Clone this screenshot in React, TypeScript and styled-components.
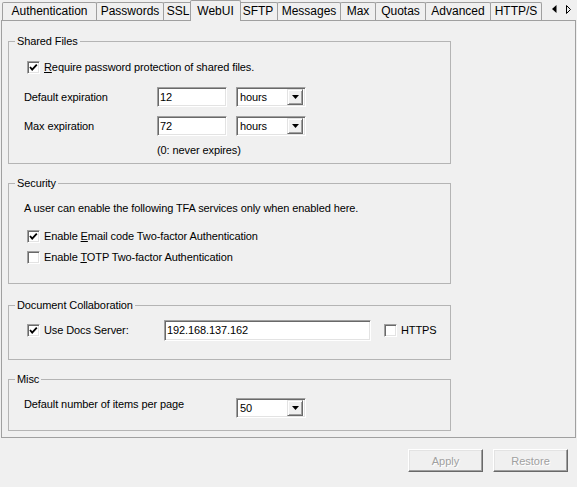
import * as React from 'react';
import styled, { createGlobalStyle } from 'styled-components';

const GlobalStyle = createGlobalStyle`
	html, body {
		margin: 0;
		padding: 0;
		background: #f0f0f0;
	}
	body {
		font-family: "Liberation Sans", Arial, sans-serif;
		font-size: 11px;
		letter-spacing: -0.1px;
		color: #000;
	}
`;

const Window = styled.div`
	width: 577px;
	height: 487px;
	display: flex;
	flex-direction: column;
	overflow: hidden;
	background: #f0f0f0;
`;

const TabStrip = styled.div`
	display: flex;
	align-items: flex-end;
	height: 20px;
	padding-left: 2px;
`;

const Tab = styled.div<{ $w: number; $active?: boolean }>`
	box-sizing: border-box;
	width: ${p => (p.$active ? p.$w + 4 : p.$w)}px;
	height: ${p => (p.$active ? 21 : 18)}px;
	margin: ${p => (p.$active ? '0 -3px -1px -2px' : '0 -1px 0 0')};
	position: relative;
	z-index: ${p => (p.$active ? 2 : 1)};
	border: 1px solid #a0a0a0;
	border-bottom: none;
	border-radius: 2px 2px 0 0;
	background: #f0f0f0;
	font-size: 12px;
	letter-spacing: 0;
	line-height: ${p => (p.$active ? 20 : 17)}px;
	text-align: center;
	white-space: nowrap;
	flex-shrink: 0;
`;

const Scroller = styled.div`
	margin-left: auto;
	align-self: center;
	display: flex;
	gap: 9px;
	padding: 0 6px 1px 0;
`;

const Panel = styled.div`
	box-sizing: border-box;
	margin-left: 1px;
	width: 575px;
	height: 418px;
	border: 1px solid #a0a0a0;
	padding: 20px 0 0 6px;
	display: flex;
	flex-direction: column;
`;

const GroupBox = styled.div<{ $h: number; $top?: number }>`
	position: relative;
	box-sizing: border-box;
	width: 443px;
	height: ${p => p.$h}px;
	margin-top: ${p => p.$top ?? 0}px;
	border: 1px solid #b4b4b4;
	flex-shrink: 0;
`;

const Caption = styled.span`
	position: absolute;
	top: -7px;
	left: 6px;
	padding: 0 2px;
	background: #f0f0f0;
	line-height: 13px;
`;

const GroupBody = styled.div<{ $pt: number }>`
	display: flex;
	flex-direction: column;
	padding: ${p => p.$pt}px 0 0 15px;
`;

const CheckRow = styled.label<{ $top?: number; $left?: number }>`
	display: flex;
	align-items: center;
	gap: 4px;
	height: 13px;
	margin: ${p => p.$top ?? 0}px 0 0 ${p => p.$left ?? 3}px;
	line-height: 13px;
	white-space: nowrap;
`;

const CheckBox = styled.span`
	box-sizing: border-box;
	width: 13px;
	height: 13px;
	flex-shrink: 0;
	background: #fff;
	border: 1px solid;
	border-color: #a0a0a0 #fff #fff #a0a0a0;
	box-shadow: inset 1px 1px 0 #696969, inset -1px -1px 0 #e3e3e3;
	display: flex;
	align-items: center;
	justify-content: center;
`;

const Key = styled.span`
	text-decoration: underline;
`;

const FieldRow = styled.div<{ $top?: number; $align?: string }>`
	display: flex;
	align-items: ${p => p.$align ?? 'center'};
	margin-top: ${p => p.$top ?? 0}px;
`;

const Label = styled.span<{ $w: number }>`
	width: ${p => p.$w}px;
	line-height: 13px;
	flex-shrink: 0;
`;

const TextBox = styled.div<{ $w: number; $h?: number }>`
	box-sizing: border-box;
	width: ${p => p.$w}px;
	height: ${p => p.$h ?? 20}px;
	background: #fff;
	border: 1px solid;
	border-color: #a0a0a0 #fff #fff #a0a0a0;
	box-shadow: inset 1px 1px 0 #696969, inset -1px -1px 0 #e3e3e3;
	padding: 2px 2px 0;
	line-height: 14px;
	flex-shrink: 0;
`;

const Combo = styled.div<{ $left?: number }>`
	box-sizing: border-box;
	width: 70px;
	height: 20px;
	margin-left: ${p => p.$left ?? 0}px;
	background: #fff;
	border: 1px solid;
	border-color: #a0a0a0 #fff #fff #a0a0a0;
	box-shadow: inset 1px 1px 0 #696969, inset -1px -1px 0 #e3e3e3;
	padding: 2px;
	display: flex;
	align-items: center;
	flex-shrink: 0;
`;

const ComboValue = styled.span`
	flex: 1;
	padding-left: 1px;
	line-height: 14px;
`;

const DropButton = styled.span`
	box-sizing: border-box;
	width: 16px;
	height: 16px;
	background: #f0f0f0;
	border: 1px solid;
	border-color: #e3e3e3 #696969 #696969 #e3e3e3;
	box-shadow: inset 1px 1px 0 #fff, inset -1px -1px 0 #a0a0a0;
	display: flex;
	align-items: center;
	justify-content: center;
`;

const Note = styled.div<{ $left: number; $top: number }>`
	margin: ${p => p.$top}px 0 0 ${p => p.$left}px;
	line-height: 13px;
`;

const Text = styled.div<{ $top?: number }>`
	margin-top: ${p => p.$top ?? 0}px;
	line-height: 13px;
`;

const Footer = styled.div`
	display: flex;
	justify-content: flex-end;
	gap: 10px;
	padding: 11px 9px 0 0;
`;

const Button = styled.button`
	box-sizing: border-box;
	width: 75px;
	height: 23px;
	padding: 0;
	background: #f0f0f0;
	border: 1px solid;
	border-color: #fff #696969 #696969 #fff;
	box-shadow: inset -1px -1px 0 #a0a0a0, inset 1px 1px 0 #e3e3e3;
	font-family: "Liberation Sans", Arial, sans-serif;
	font-size: 11px;
	color: #a0a0a0;
	text-shadow: 1px 1px 0 #fff;
`;

const tabs: [string, number][] = [
	['Authentication', 95],
	['Passwords', 68],
	['SSL', 30],
	['WebUI', 47],
	['SFTP', 40],
	['Messages', 64],
	['Max', 36],
	['Quotas', 51],
	['Advanced', 66],
	['HTTP/S', 52],
];

const Check = ({ on }: { on?: boolean }) => (
	<CheckBox>
		{on && (
			<svg width="9" height="9" viewBox="0 0 9 9">
				<path d="M1 4 L3.2 6.6 L7.8 1.6" fill="none" stroke="#000" strokeWidth="1.8" />
			</svg>
		)}
	</CheckBox>
);

const Dropdown = ({ value, left }: { value: string; left?: number }) => (
	<Combo $left={left}>
		<ComboValue>{value}</ComboValue>
		<DropButton>
			<svg width="7" height="4" viewBox="0 0 7 4">
				<path d="M0 0 H7 L3.5 4 Z" fill="#000" />
			</svg>
		</DropButton>
	</Combo>
);

export default function App() {
	return (
		<Window>
			<GlobalStyle />
			<TabStrip>
				{tabs.map(([name, w]) => (
					<Tab key={name} $w={w} $active={name === 'WebUI'}>
						{name}
					</Tab>
				))}
				<Scroller>
					<svg width="5" height="8" viewBox="0 0 5 8">
						<path d="M4.5 0 V8 L0 4 Z" fill="#000" />
					</svg>
					<svg width="5" height="9" viewBox="0 0 5 9">
						<path d="M0.5 0.5 V8.5 L4.5 4.5 Z" fill="none" stroke="#000" strokeWidth="1" />
					</svg>
				</Scroller>
			</TabStrip>

			<Panel>
				<GroupBox $h={123}>
					<Caption>Shared Files</Caption>
					<GroupBody $pt={19}>
						<CheckRow>
							<Check on />
							<span>
								<Key>R</Key>equire password protection of shared files.
							</span>
						</CheckRow>
						<FieldRow $top={13}>
							<Label $w={133}>Default expiration</Label>
							<TextBox $w={70}>12</TextBox>
							<Dropdown value="hours" left={9} />
						</FieldRow>
						<FieldRow $top={9}>
							<Label $w={133}>Max expiration</Label>
							<TextBox $w={70}>72</TextBox>
							<Dropdown value="hours" left={9} />
						</FieldRow>
						<Note $left={133} $top={8}>
							(0: never expires)
						</Note>
					</GroupBody>
				</GroupBox>

				<GroupBox $h={101} $top={19}>
					<Caption>Security</Caption>
					<GroupBody $pt={18}>
						<Text>A user can enable the following TFA services only when enabled here.</Text>
						<CheckRow $top={15}>
							<Check on />
							<span>
								Enable <Key>E</Key>mail code Two-factor Authentication
							</span>
						</CheckRow>
						<CheckRow $top={8}>
							<Check />
							<span>
								Enable <Key>T</Key>OTP Two-factor Authentication
							</span>
						</CheckRow>
					</GroupBody>
				</GroupBox>

				<GroupBox $h={55} $top={21}>
					<Caption>Document Collaboration</Caption>
					<GroupBody $pt={14}>
						<FieldRow>
							<Label $w={140}>
								<CheckRow>
									<Check on />
									<span>Use Docs Server:</span>
								</CheckRow>
							</Label>
							<TextBox $w={207} $h={21}>
								192.168.137.162
							</TextBox>
							<CheckRow $left={13}>
								<Check />
								<span>HTTPS</span>
							</CheckRow>
						</FieldRow>
					</GroupBody>
				</GroupBox>

				<GroupBox $h={52} $top={19}>
					<Caption>Misc</Caption>
					<GroupBody $pt={18}>
						<FieldRow $align="flex-start">
							<Label $w={212}>Default number of items per page</Label>
							<Dropdown value="50" />
						</FieldRow>
					</GroupBody>
				</GroupBox>
			</Panel>

			<Footer>
				<Button disabled>Apply</Button>
				<Button disabled>Restore</Button>
			</Footer>
		</Window>
	);
}
